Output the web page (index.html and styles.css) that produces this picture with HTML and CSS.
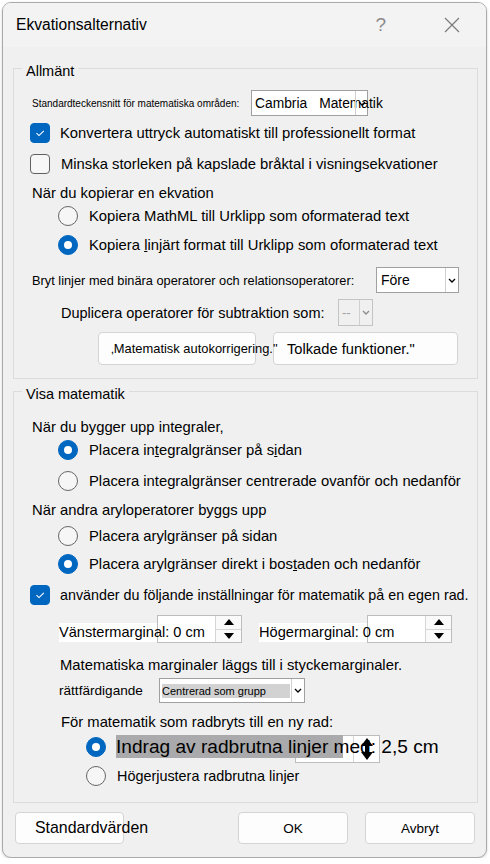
FILE: index.html
```html
<!DOCTYPE html>
<html>
  <head>
    <title>Ekvationsalternativ</title>
    <link rel="stylesheet" href="styles.css">
  </head>
  <body>
    <div class="dialog">
      <div class="titleBar">
        <span class="title">Ekvationsalternativ</span>
        <span class="help">?</span>
        <svg class="close" width="16" height="16" viewBox="0 0 16 16"><path d="M1 1 L15 15 M15 1 L1 15" stroke="#7a7a7a" stroke-width="1.2" fill="none"/></svg>
      </div>

      <fieldset class="group general">
        <legend>Allmänt</legend>
        <div class="row fontRow">
          <span class="fontLabel">Standardteckensnitt för matematiska områden:</span>
          <div class="select fontSelect">
            <span class="selText">Cambria<span class="wide">Matematik</span></span>
            <span class="arrow"><svg width="8" height="5" viewBox="0 0 8 5"><path d="M1 1 L4 4 L7 1" stroke="#000" stroke-width="1.3" fill="none"/></svg></span>
          </div>
        </div>
        <div class="row checkRow convert">
          <span class="check on"><svg width="20" height="20" viewBox="0 0 20 20"><path d="M6.5 10.2 L9 12.6 L13.8 7.8" stroke="#fff" stroke-width="1.1" fill="none"/></svg></span>
          <span class="checkText">Konvertera uttryck automatiskt till professionellt format</span>
        </div>
        <div class="row checkRow shrink">
          <span class="check"></span>
          <span class="checkText far">Minska storleken på kapslade bråktal i visningsekvationer</span>
        </div>
        <div class="row label copyLabel">När du kopierar en ekvation</div>
        <div class="row radioRow first">
          <span class="radio"></span>
          <span class="radioText">Kopiera MathML till Urklipp som oformaterad text</span>
        </div>
        <div class="row radioRow copyLinear">
          <span class="radio on"></span>
          <span class="radioText">Kopiera <u>l</u>injärt format till Urklipp som oformaterad text</span>
        </div>
        <div class="row breakRow">
          <span class="breakLabel">Bryt linjer med binära operatorer och relationsoperatorer:</span>
          <div class="select breakSelect">
            <span class="selText">Före</span>
            <span class="arrow"><svg width="8" height="5" viewBox="0 0 8 5"><path d="M1 1 L4 4 L7 1" stroke="#000" stroke-width="1.3" fill="none"/></svg></span>
          </div>
        </div>
        <div class="row dupRow">
          <span class="dupLabel">Duplicera operatorer för subtraktion som:</span>
          <div class="select dupSelect">
            <span class="selText">--</span>
            <span class="arrow"><svg width="8" height="5" viewBox="0 0 8 5"><path d="M1 1 L4 4 L7 1" stroke="#8a8a8a" stroke-width="1.3" fill="none"/></svg></span>
          </div>
        </div>
        <div class="row btnRow">
          <button class="btn autoBtn">‚Matematisk autokorrigering."</button>
          <button class="btn funcBtn">Tolkade funktioner."</button>
        </div>
      </fieldset>

      <fieldset class="group display">
        <legend>Visa matematik</legend>
        <div class="row label intLabel">När du bygger upp integraler,</div>
        <div class="row radioRow intSide">
          <span class="radio on"></span>
          <span class="radioText">Placera in<u>t</u>egralgränser på s<u>i</u>dan</span>
        </div>
        <div class="row radioRow intCenter">
          <span class="radio"></span>
          <span class="radioText">Placera integralgränser centrerade ovanför och nedanför</span>
        </div>
        <div class="row label naryLabel">När andra aryloperatorer byggs upp</div>
        <div class="row radioRow narySide">
          <span class="radio"></span>
          <span class="radioText">Placera arylgränser på sidan</span>
        </div>
        <div class="row radioRow naryDirect">
          <span class="radio on"></span>
          <span class="radioText">Placera arylgränser direkt i bos<u>t</u>aden och nedanför</span>
        </div>
        <div class="row checkRow ownLine">
          <span class="check on"><svg width="20" height="20" viewBox="0 0 20 20"><path d="M6.5 10.2 L9 12.6 L13.8 7.8" stroke="#fff" stroke-width="1.1" fill="none"/></svg></span>
          <span class="checkText small">använder du följande inställningar för matematik på en egen rad.</span>
        </div>
        <div class="row marginRow">
          <span class="spinLabel left">Vänstermarginal: 0 cm</span>
          <div class="spin">
            <span class="spinBtns">
              <span><svg width="10" height="6" viewBox="0 0 10 6"><path d="M5 0 L10 6 L0 6 Z" fill="#000"/></svg></span>
              <span><svg width="10" height="6" viewBox="0 0 10 6"><path d="M0 0 L10 0 L5 6 Z" fill="#000"/></svg></span>
            </span>
          </div>
          <span class="spinLabel right">Högermarginal: 0 cm</span>
          <div class="spin">
            <span class="spinBtns">
              <span><svg width="10" height="6" viewBox="0 0 10 6"><path d="M5 0 L10 6 L0 6 Z" fill="#000"/></svg></span>
              <span><svg width="10" height="6" viewBox="0 0 10 6"><path d="M0 0 L10 0 L5 6 Z" fill="#000"/></svg></span>
            </span>
          </div>
        </div>
        <div class="row label marginNote">Matematiska marginaler läggs till i styckemarginaler.</div>
        <div class="row justRow">
          <span class="justLabel">rättfärdigande</span>
          <div class="select justSelect">
            <span class="selText"><span class="pick">Centrerad som grupp</span></span>
            <span class="arrow"><svg width="8" height="5" viewBox="0 0 8 5"><path d="M1 1 L4 4 L7 1" stroke="#000" stroke-width="1.3" fill="none"/></svg></span>
          </div>
        </div>
        <div class="row label wrapLabel">För matematik som radbryts till en ny rad:</div>
        <div class="row radioRow indentRow">
          <span class="radio on"></span>
          <span class="indentText">
            <span class="spin indentSpin">
              <span class="spinBtns big"><svg width="12" height="22" viewBox="0 0 12 22"><path d="M6 0 L12 8 L8 8 L8 14 L12 14 L6 22 L0 14 L4 14 L4 8 L0 8 Z" fill="#000"/></svg></span>
            </span>
            <span class="indentLabel">Indrag av radbrutna linjer med: 2,5 cm</span>
          </span>
        </div>
        <div class="row radioRow rightAlign">
          <span class="radio"></span>
          <span class="radioText">Högerjustera radbrutna linjer</span>
        </div>
      </fieldset>

      <div class="footer">
        <button class="btn defaultsBtn">Standardvärden</button>
        <button class="btn okBtn">OK</button>
        <button class="btn cancelBtn">Avbryt</button>
      </div>
    </div>
  </body>
</html>
```

FILE: styles.css
```css
body { margin: 0; background: #fff; font-family: "Liberation Sans", Arial, sans-serif; font-size: 14.8px; color: #000; }

.dialog { margin: 2px 0 0 2px; width: 483px; border: 1px solid #aaa; border-radius: 9px; background: #f0f0f0; overflow: hidden; padding-bottom: 13px; box-shadow: 0 1px 3px rgba(0, 0, 0, 0.18); }

.titleBar { display: flex; align-items: center; height: 44px; background: #f3f3f3; padding: 0 26px 0 13px; }
.title { flex: 1; font-size: 15.6px; }
.help { font-size: 19px; color: #8a8a8a; margin-right: 58px; }
.close { display: block; }

.group { margin: 9px 8px 0 10px; padding: 0 0 13px; border: 1px solid #dcdcdc; min-width: 0; }
.group legend { margin-left: 8px; padding: 6px 4px 0; font-size: 14.5px; line-height: 18px; }
.display { margin-top: 0; padding-bottom: 16px; }

.row { display: flex; align-items: center; white-space: nowrap; }
.label { height: 20px; padding-left: 18px; }

.select { display: flex; align-items: center; box-sizing: border-box; background: #fff; border: 1px solid #a0a0a0; }
.selText { flex: 1; overflow: visible; }
.select .arrow { width: 12px; align-self: stretch; display: flex; align-items: center; justify-content: center; border-left: 1px solid #d0d0d0; }
.select .arrow svg { display: block; }

.check { width: 20px; height: 20px; box-sizing: border-box; border: 1px solid #616161; border-radius: 4px; background: #f7f7f7; flex: none; }
.check.on { background: #0067c0; border-color: #0067c0; }
.check svg { display: block; margin: -1px; }
.checkRow { padding-left: 16px; }
.checkText { margin-left: 10px; }
.checkText.far { margin-left: 11px; }
.checkText.small { font-size: 14.3px; }

.radio { width: 20px; height: 20px; box-sizing: border-box; border: 1px solid #666; border-radius: 50%; background: #f6f6f6; flex: none; display: flex; align-items: center; justify-content: center; }
.radio.on { background: #0067c0; border-color: #0067c0; }
.radio.on::after { content: ""; width: 8px; height: 8px; border-radius: 50%; background: #fff; }
.radioRow { height: 20px; padding-left: 44px; }
.radioText { margin-left: 11px; }

/* Allmänt */
.fontRow { margin-top: 9px; height: 28px; padding-left: 18px; }
.fontLabel { width: 219px; font-size: 10px; }
.fontSelect { width: 117px; height: 26px; font-size: 13.8px; }
.fontSelect .selText { padding-left: 3px; width: 101px; }
.fontSelect .wide { margin-left: 12px; }
.fontSelect .arrow { margin-left: -1px; }
.convert { height: 32px; }
.shrink { height: 30px; }
.copyLabel { height: 27px; }
.copyLinear { margin-top: 9px; }
.breakRow { margin-top: 12px; height: 26px; padding-left: 18px; }
.breakLabel { width: 344px; font-size: 12.8px; }
.breakSelect { width: 83px; height: 26px; font-size: 14px; }
.breakSelect .selText { padding-left: 4px; }
.dupRow { margin-top: 6px; height: 27px; padding-left: 47px; }
.dupLabel { width: 277px; font-size: 14.5px; }
.dupSelect { width: 35px; height: 27px; border-color: #c4c4c4; background: #f0f0f0; color: #a0a0a0; font-size: 13px; }
.dupSelect .selText { padding-left: 3px; }
.btnRow { margin-top: 6px; height: 33px; padding-left: 84px; gap: 17px; }
.btn { box-sizing: border-box; height: 33px; background: #fdfdfd; border: 1px solid #d4d4d4; border-radius: 4px; font-family: inherit; color: #000; padding: 0; white-space: nowrap; }
.autoBtn { position: relative; z-index: 1; width: 158px; font-size: 12.9px; text-align: left; padding-left: 12px; overflow: visible; }
.funcBtn { width: 185px; font-size: 14.7px; text-align: left; padding-left: 13px; }

/* Visa matematik */
.intLabel { margin-top: 14px; }
.intSide { margin-top: 3px; }
.intCenter { margin-top: 11px; }
.naryLabel { margin-top: 9px; }
.narySide { margin-top: 6px; }
.naryDirect { margin-top: 8px; }
.ownLine { margin-top: 11px; height: 20px; }
.marginRow { margin-top: 10px; height: 28px; padding-left: 45px; align-items: flex-end; }
.spinLabel { position: relative; z-index: 1; background: #fff; height: 19px; line-height: 19px; margin-bottom: 1px; font-size: 14.6px; overflow: visible; }
.spinLabel.left { width: 98px; }
.spinLabel.right { width: 108px; margin-left: 17px; }
.spin { width: 85px; height: 28px; box-sizing: border-box; background: #fff; border: 1px solid #bdbdbd; display: flex; justify-content: flex-end; flex: none; }
.spinBtns { width: 25px; display: flex; flex-direction: column; border-left: 1px solid #d6d6d6; background: #fafafa; }
.spinBtns > span { flex: 1; display: flex; align-items: center; justify-content: center; }
.spinBtns > span + span { border-top: 1px solid #d6d6d6; }
.spinBtns.big { align-items: center; justify-content: center; background: #fff; }
.marginNote { margin-top: 12px; padding-left: 46px; }
.justRow { margin-top: 3px; height: 25px; padding-left: 45px; }
.justLabel { width: 100px; font-size: 13.6px; }
.justSelect { width: 146px; height: 25px; font-size: 11px; }
.justSelect .selText { padding-left: 2px; }
.justSelect .pick { display: inline-block; width: 128px; height: 14px; line-height: 14px; background: #d2d2d2; }
.wrapLabel { margin-top: 9px; padding-left: 47px; }
.indentRow { margin-top: 3px; height: 23px; padding-left: 72px; }
.indentText { position: relative; margin-left: 10px; height: 23px; }
.indentSpin { position: absolute; left: 179px; top: 0; }
.indentLabel { position: relative; display: block; font-size: 19.1px; line-height: 23px; background: linear-gradient(#aaaaac, #aaaaac) no-repeat; background-size: 227px 23px; }
.rightAlign { margin-top: 8px; padding-left: 72px; }
.rightAlign .radioText { font-size: 14.4px; }

.footer { display: flex; margin-top: 9px; padding: 0 11px 0 12px; gap: 17px; }
.footer .btn { height: 32px; }
.defaultsBtn { width: 109px; font-size: 15.9px; text-align: left; padding-left: 19px; overflow: visible; margin-right: auto; }
.okBtn, .cancelBtn { width: 110px; font-size: 13.5px; }
```
